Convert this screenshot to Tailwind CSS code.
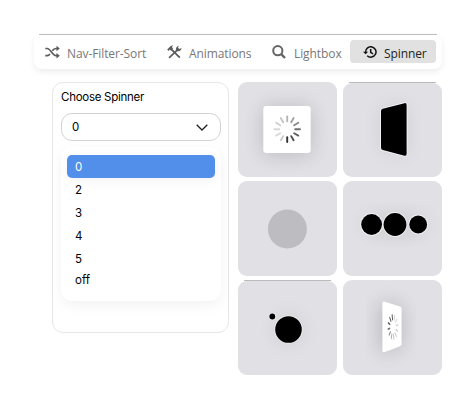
<!DOCTYPE html>
<html lang="en">
<head>
<meta charset="utf-8">
<title>Spinner</title>
<script src="https://cdn.jsdelivr.net/npm/@tailwindcss/browser@4"></script>
</head>
<body class="bg-white w-[474px] h-[410px] overflow-hidden pt-[34px] pl-[34px] font-['Inter',sans-serif] text-black">
<svg width="0" height="0" class="absolute">
  <defs>
    <g id="blades" stroke="#333" stroke-width="1.9" stroke-linecap="round">
      <path d="M0 8V12.8" opacity="1"/>
      <path d="M0 8V12.8" transform="rotate(-30)" opacity=".88"/>
      <path d="M0 8V12.8" transform="rotate(-60)" opacity=".78"/>
      <path d="M0 8V12.8" transform="rotate(-90)" opacity=".7"/>
      <path d="M0 8V12.8" transform="rotate(-120)" opacity=".58"/>
      <path d="M0 8V12.8" transform="rotate(-150)" opacity=".46"/>
      <path d="M0 8V12.8" transform="rotate(180)" opacity=".36"/>
      <path d="M0 8V12.8" transform="rotate(150)" opacity=".29"/>
      <path d="M0 8V12.8" transform="rotate(120)" opacity=".23"/>
      <path d="M0 8V12.8" transform="rotate(90)" opacity=".19"/>
      <path d="M0 8V12.8" transform="rotate(60)" opacity=".19"/>
      <path d="M0 8V12.8" transform="rotate(30)" opacity=".26"/>
    </g>
    <filter id="soft" x="-60%" y="-60%" width="220%" height="220%"><feGaussianBlur stdDeviation="10"/></filter>
  </defs>
</svg>

<nav class="w-[408px] h-[35px] rounded-[8px] shadow-[0_3px_6px_rgba(0,0,0,0.07)] flex flex-col font-['Open_Sans',sans-serif] text-[12px] tracking-[-0.09px] text-[#777]">
  <div class="h-px shrink-0 mx-[5px] bg-[#bdbdbd]"></div>
  <div class="flex items-center h-[34px]">
    <a class="flex items-center w-[122px] pl-[11px] whitespace-nowrap">
      <svg class="shrink-0 mr-[7px]" width="15" height="14" viewBox="0 0 15 14" fill="none" stroke="#5c5c5c" stroke-width="1.7"><path d="M.3 3.5H2.2C5.5 3.5 7.5 10.7 11 10.7H12.5M.3 10.7H2.2C3.4 10.7 4.2 10 5 8.9M7.3 5.7C8.3 4.3 9.4 3.5 11 3.5H12.5"/><path d="M11.5 .8L14.8 3.5L11.5 6.2ZM11.5 8L14.8 10.7L11.5 13.4Z" fill="#5c5c5c" stroke="none"/></svg>
      <span class="pt-[3px]">Nav-Filter-Sort</span>
    </a>
    <a class="flex items-center w-[105px] pl-[11px] whitespace-nowrap">
      <svg class="shrink-0 mr-[7px]" width="15" height="14" viewBox="0 0 15 14" fill="none" stroke="#5c5c5c"><path d="M4.2 4.2L12.8 12.7" stroke-width="1.8"/><path d="M2 12.8L10.5 4.8" stroke-width="1.7"/><path d="M.2 4.6L3.7 1C4.5 .3 5.6 .3 6.3 .8L4.7 1.7L6 3.5L4 5.7L2.7 4.6L1.7 6Z" fill="#5c5c5c" stroke="none"/><path d="M9 5.2C8.6 3.5 9.4 1.3 11.8 .8L11 2.8L12.4 4L14.5 3.1C14.6 5.4 12.4 6.8 10.3 6.2Z" fill="#5c5c5c" stroke="none"/></svg>
      <span class="pt-[3px]">Animations</span>
    </a>
    <a class="flex items-center w-[89px] pl-[11px] whitespace-nowrap">
      <svg class="shrink-0 mr-[8px]" width="14" height="14" viewBox="0 0 14 14" fill="none" stroke="#666" stroke-width="2"><circle cx="5.8" cy="5.7" r="4.6"/><path d="M9.2 9.2L13 13" stroke-width="2.4"/></svg>
      <span class="pt-[3px]">Lightbox</span>
    </a>
    <a class="flex items-center w-[86px] h-[23px] pl-[13px] rounded-[4px] bg-[#e1e1e1] -mt-px text-[#222] whitespace-nowrap">
      <svg class="shrink-0 mr-[7px] mt-px" width="14" height="12" viewBox="0 0 14 12" fill="none" stroke="#111" stroke-width="1.5"><path d="M2.6 6A5.2 5.2 0 1 1 4.2 9.7M7.7 3V6.4L10 7.8"/><path d="M0 5.7H5.1L2.6 8.3Z" fill="#111" stroke="none"/></svg>
      <span class="pt-[4px]">Spinner</span>
    </a>
  </div>
</nav>

<main class="flex mt-[13px] pl-[18px] gap-[9px]">
  <section class="w-[177px] h-[251px] shrink-0 border border-[#e7e7e7] rounded-[11px] px-[8px] pt-[7px] text-[11.5px]">
    <h2 class="h-[15px] leading-[15px] whitespace-nowrap tracking-[-0.27px]">Choose Spinner</h2>
    <div class="mt-[8px] w-[160px] h-[28px] flex items-center justify-between rounded-[11px] border border-[#d3d3d3] pl-[10px] pr-[12px]">
      <span class="pt-[2px]">0</span>
      <svg width="12" height="7" viewBox="0 0 12 7" fill="none" stroke="#222" stroke-width="1.3"><path d="M.7 .7L6 6L11.3 .7"/></svg>
    </div>
    <ul class="mt-[6px] w-[160px] h-[154px] rounded-[11px] bg-white shadow-[0_4px_14px_rgba(0,0,0,0.055)] pt-[8.4px] px-[6.4px]">
      <li class="h-[23px] w-[147.6px] flex items-center rounded-[5px] bg-[#528fea] text-white pl-[7.6px] pt-[2px] shadow-[0_3px_12px_rgba(0,0,0,0.05)]">0</li>
      <li class="h-[23px] flex items-center pl-[7.6px] pt-[2px]">2</li>
      <li class="h-[23px] flex items-center pl-[7.6px] pt-[2px]">3</li>
      <li class="h-[23px] flex items-center pl-[7.6px] pt-[2px]">4</li>
      <li class="h-[23px] flex items-center pl-[7.6px] pt-[2px]">5</li>
      <li class="h-[19px] flex items-center pl-[7.6px] pt-[2px]">off</li>
    </ul>
  </section>

  <section class="grid grid-cols-[99px_99px] auto-rows-[95px] gap-x-[6px] gap-y-[4px]">
    <div class="rounded-[9px] bg-[#e0e0e5] overflow-hidden">
      <svg width="99" height="95" viewBox="0 0 99 95"><rect x="25" y="25" width="48" height="48" opacity=".16" filter="url(#soft)"/><rect x="25.3" y="24" width="47.4" height="47" rx="3" fill="#fff"/><use href="#blades" transform="translate(49.2 47.2)"/></svg>
    </div>
    <div class="flex flex-col">
      <div class="h-px mx-[6px] shrink-0 bg-[#bbb]"></div>
      <div class="h-[94px] rounded-[9px] bg-[#e0e0e5] overflow-hidden">
        <svg width="99" height="94" viewBox="0 1 99 94"><path d="M38 27L63 21V74L38 67Z" opacity=".08" filter="url(#soft)"/><path d="M39.8 26.7L61.5 21.2Q63.6 20.7 63.6 23V72Q63.6 74.2 61.5 73.8L39.8 68Q38 67.5 38 65.5V29Q38 27.2 39.8 26.7Z" stroke="#f1f1f4" stroke-width="2" paint-order="stroke"/></svg>
      </div>
    </div>
    <div class="rounded-[9px] bg-[#e0e0e5] overflow-hidden">
      <svg width="99" height="95" viewBox="0 0 99 95"><circle cx="49.4" cy="48" r="19.5" fill="#bdbdc1"/></svg>
    </div>
    <div class="rounded-[9px] bg-[#e0e0e5] overflow-hidden">
      <svg width="99" height="95" viewBox="0 0 99 95"><ellipse cx="52" cy="44" rx="33" ry="10" opacity=".09" filter="url(#soft)"/><g stroke="#f1f1f4" stroke-width="2" paint-order="stroke"><circle cx="28.6" cy="43.5" r="10.4"/><circle cx="52" cy="43.5" r="11.4"/><circle cx="75.2" cy="43.5" r="8.9"/></g></svg>
    </div>
    <div class="flex flex-col">
      <div class="h-px mx-[6px] shrink-0 bg-[#bbb]"></div>
      <div class="h-[94px] rounded-[9px] bg-[#e0e0e5] overflow-hidden">
        <svg width="99" height="94" viewBox="0 1 99 94"><circle cx="50.5" cy="49.5" r="14" opacity=".08" filter="url(#soft)"/><g stroke="#f1f1f4" stroke-width="1.6" paint-order="stroke"><circle cx="34.3" cy="36.5" r="2.9"/><circle cx="50.5" cy="49.5" r="13.3"/></g></svg>
      </div>
    </div>
    <div class="rounded-[9px] bg-[#e0e0e5] overflow-hidden">
      <svg width="99" height="95" viewBox="0 0 99 95"><path d="M37 21L59 27V67L37 73Z" opacity=".18" filter="url(#soft)"/><path d="M41.2 21.6L57 26.4Q58.6 27 58.6 28.6V64Q58.6 65.6 57 66.2L41.2 72.2Q39.4 72.6 39.4 70.5V23.4Q39.4 21.2 41.2 21.6Z" fill="#fff"/><use href="#blades" transform="translate(50 47) scale(.4 .95) rotate(170)"/></svg>
    </div>
  </section>
</main>
</body>
</html>
